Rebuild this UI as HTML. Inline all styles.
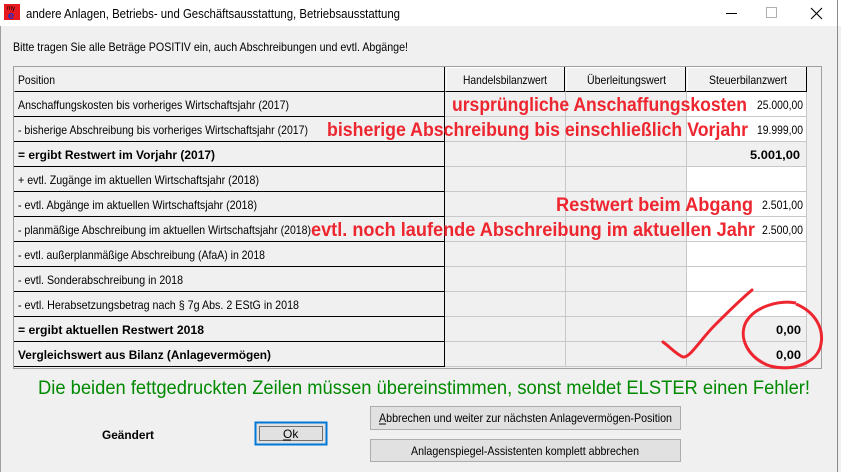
<!DOCTYPE html>
<html><head><meta charset="utf-8"><style>html,body{margin:0;padding:0;background:#f0f0f0;overflow:hidden}svg{display:block}</style></head><body>
<svg width="841" height="472" xmlns="http://www.w3.org/2000/svg" font-family="Liberation Sans, sans-serif">
<rect width="841" height="472" fill="#f0f0f0"/>
<rect width="841" height="26" fill="#fff"/>
<line x1="837.5" y1="0" x2="837.5" y2="472" stroke="#8a8a8a"/>
<line x1="0.5" y1="26" x2="0.5" y2="472" stroke="#a0a0a0"/>
<rect x="4" y="4" width="16" height="16" fill="#e8191e"/>
<text x="7" y="10" font-size="6" fill="#000">my</text>
<text x="8" y="19" font-size="11" font-weight="bold" fill="#1a2fc8">e</text>
<text x="26" y="18" font-size="13" fill="#000" textLength="374" lengthAdjust="spacingAndGlyphs">andere Anlagen, Betriebs- und Geschäftsausstattung, Betriebsausstattung</text>
<line x1="726" y1="13.5" x2="737" y2="13.5" stroke="#000"/>
<rect x="766.5" y="7.5" width="10" height="10" fill="none" stroke="#b0b0b0"/>
<path d="M811 8 L822 19 M822 8 L811 19" stroke="#000" stroke-width="1.1"/>
<text x="13" y="51" font-size="12" fill="#000" textLength="395" lengthAdjust="spacingAndGlyphs">Bitte tragen Sie alle Beträge POSITIV ein, auch Abschreibungen und evtl. Abgänge!</text>
<rect x="13.5" y="66.5" width="808" height="302" fill="#f0f0f0" stroke="#a0a0a0"/>
<g font-size="12" fill="#000">
<rect x="14" y="67" width="431" height="25" fill="#f0f0f0"/>
<path d="M14.5 91.5 H444.5 V67" stroke="#000" fill="none"/>
<path d="M445.5 91.5 H564.5 V67 M565.5 91.5 H685.5 V67 M686.5 91.5 H806.5 V67" stroke="#000" fill="none"/>
<path d="M446.5 91 V67.5 H564 M566.5 91 V67.5 H685 M687.5 91 V67.5 H806" stroke="#fff" fill="none"/>
<text x="18" y="84" textLength="37" lengthAdjust="spacingAndGlyphs">Position</text>
<text x="463" y="84" textLength="84" lengthAdjust="spacingAndGlyphs">Handelsbilanzwert</text>
<text x="587" y="84" textLength="79" lengthAdjust="spacingAndGlyphs">Überleitungswert</text>
<text x="709" y="84" textLength="78" lengthAdjust="spacingAndGlyphs">Steuerbilanzwert</text>
<rect x="687" y="92" width="120" height="50" fill="#fff"/>
<rect x="687" y="167" width="120" height="150" fill="#fff"/>
<g stroke="#c8c8c8">
<path d="M445 116.5 H807 M445 141.5 H807 M445 166.5 H807 M445 191.5 H807 M445 216.5 H807 M445 241.5 H807 M445 266.5 H807 M445 291.5 H807 M445 316.5 H807 M445 341.5 H807 M445 366.5 H807"/>
<path d="M565.5 92 V367 M686.5 92 V367 M806.5 92 V367"/>
</g>
<g stroke="#000" fill="none">
<path d="M14 116.5 H444.5 V92 M14 141.5 H444.5 V117 M14 166.5 H444.5 V142 M14 191.5 H444.5 V167 M14 216.5 H444.5 V192 M14 241.5 H444.5 V217 M14 266.5 H444.5 V242 M14 291.5 H444.5 V267 M14 316.5 H444.5 V292 M14 341.5 H444.5 V317 M14 366.5 H444.5 V342"/>
</g>
<text x="18" y="109" textLength="271" lengthAdjust="spacingAndGlyphs">Anschaffungskosten bis vorheriges Wirtschaftsjahr (2017)</text>
<text x="18" y="134" textLength="290" lengthAdjust="spacingAndGlyphs">- bisherige Abschreibung bis vorheriges Wirtschaftsjahr (2017)</text>
<text x="18" y="159" font-weight="bold" textLength="197" lengthAdjust="spacingAndGlyphs">= ergibt Restwert im Vorjahr (2017)</text>
<text x="18" y="184" textLength="241" lengthAdjust="spacingAndGlyphs">+ evtl. Zugänge im aktuellen Wirtschaftsjahr (2018)</text>
<text x="18" y="209" textLength="239" lengthAdjust="spacingAndGlyphs">- evtl. Abgänge im aktuellen Wirtschaftsjahr (2018)</text>
<text x="18" y="234" textLength="293" lengthAdjust="spacingAndGlyphs">- planmäßige Abschreibung im aktuellen Wirtschaftsjahr (2018)</text>
<text x="18" y="259" textLength="247" lengthAdjust="spacingAndGlyphs">- evtl. außerplanmäßige Abschreibung (AfaA) in 2018</text>
<text x="18" y="284" textLength="165" lengthAdjust="spacingAndGlyphs">- evtl. Sonderabschreibung in 2018</text>
<text x="18" y="309" textLength="281" lengthAdjust="spacingAndGlyphs">- evtl. Herabsetzungsbetrag nach § 7g Abs. 2 EStG in 2018</text>
<text x="18" y="334" font-weight="bold" textLength="186" lengthAdjust="spacingAndGlyphs">= ergibt aktuellen Restwert 2018</text>
<text x="18" y="359" font-weight="bold" textLength="253" lengthAdjust="spacingAndGlyphs">Vergleichswert aus Bilanz (Anlagevermögen)</text>
<text x="757" y="109" textLength="46" lengthAdjust="spacingAndGlyphs">25.000,00</text>
<text x="757" y="134" textLength="46" lengthAdjust="spacingAndGlyphs">19.999,00</text>
<text x="750" y="159" font-weight="bold" textLength="50" lengthAdjust="spacingAndGlyphs">5.001,00</text>
<text x="762" y="209" textLength="41" lengthAdjust="spacingAndGlyphs">2.501,00</text>
<text x="762" y="234" textLength="41" lengthAdjust="spacingAndGlyphs">2.500,00</text>
<text x="776" y="334" font-weight="bold" textLength="25" lengthAdjust="spacingAndGlyphs">0,00</text>
<text x="776" y="359" font-weight="bold" textLength="25" lengthAdjust="spacingAndGlyphs">0,00</text>
</g>
<g font-size="19" font-weight="bold" fill="#ee2630">
<text x="452" y="111" textLength="295" lengthAdjust="spacingAndGlyphs">ursprüngliche Anschaffungskosten</text>
<text x="327" y="136" textLength="421" lengthAdjust="spacingAndGlyphs">bisherige Abschreibung bis einschließlich Vorjahr</text>
<text x="556" y="211" textLength="197" lengthAdjust="spacingAndGlyphs">Restwert beim Abgang</text>
<text x="311" y="236" textLength="444" lengthAdjust="spacingAndGlyphs">evtl. noch laufende Abschreibung im aktuellen Jahr</text>
</g>
<path d="M663 342 C670 347 676 354 683 357 C690 358 700 340 715 325 C728 312 740 300 752 290" stroke="#ee2630" stroke-width="3" fill="none" stroke-linecap="round"/>
<path d="M796 303 C780 300 755 306 746 322 C738 338 748 358 770 366 C795 372 818 362 821 344 C824 328 815 312 796 304" stroke="#ee2630" stroke-width="3" fill="none"/>
<text x="38" y="394" font-size="19" fill="#008a00" textLength="772" lengthAdjust="spacingAndGlyphs">Die beiden fettgedruckten Zeilen müssen übereinstimmen, sonst meldet ELSTER einen Fehler!</text>
<text x="102" y="439" font-size="12" font-weight="bold" fill="#000" textLength="52" lengthAdjust="spacingAndGlyphs">Geändert</text>
<rect x="255.5" y="422.5" width="71" height="22" fill="#e1e1e1" stroke="#0078d7" stroke-width="2"/>
<rect x="259.5" y="426.5" width="63" height="14" fill="none" stroke="#000" stroke-dasharray="1 1"/>
<text x="283" y="438" font-size="12" fill="#000">Ok</text>
<line x1="283" y1="440" x2="291" y2="440" stroke="#000"/>
<rect x="370.5" y="406.5" width="310" height="23" fill="#e1e1e1" stroke="#adadad"/>
<text x="379" y="422" font-size="12" fill="#000" textLength="293" lengthAdjust="spacingAndGlyphs">Abbrechen und weiter zur nächsten Anlagevermögen-Position</text>
<line x1="379" y1="424" x2="386" y2="424" stroke="#000"/>
<rect x="370.5" y="439.5" width="310" height="22" fill="#e1e1e1" stroke="#adadad"/>
<text x="411" y="455" font-size="12" fill="#000" textLength="228" lengthAdjust="spacingAndGlyphs">Anlagenspiegel-Assistenten komplett abbrechen</text>
</svg>
</body></html>
